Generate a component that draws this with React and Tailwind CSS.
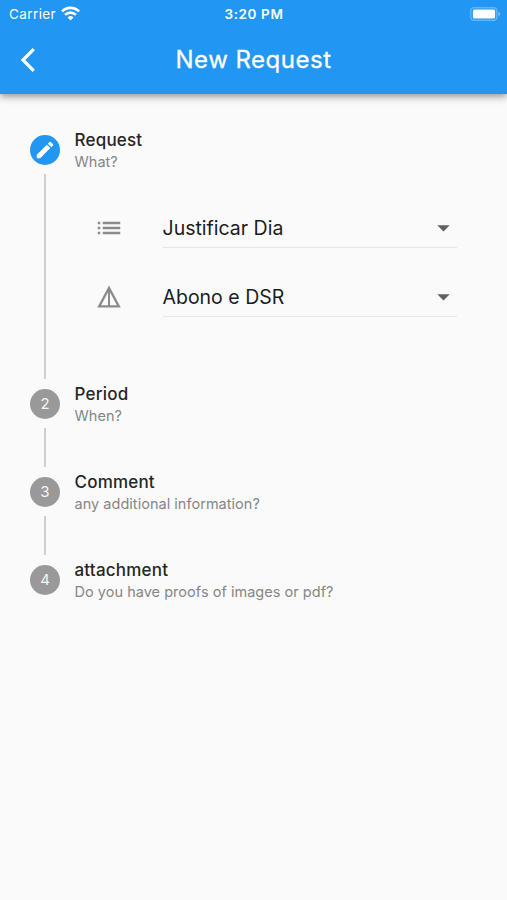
function StatusBar() {
  return (
    <div className="grid h-[27px] grid-cols-3 items-center pl-[9px] pr-[8px]">
      <div className="flex items-center gap-[5px]">
        <span className="text-[13.5px] leading-[18px] tracking-[0.4px]">Carrier</span>
        <svg className="-mt-px" width="19" height="15" viewBox="0 0 19 15" fill="none" stroke="white" strokeWidth="2.7">
          <path d="M1 5.4a12 12 0 0 1 17 0" />
          <path d="M4.1 8.9a7.7 7.7 0 0 1 10.8 0" />
          <path d="M9.5 14.4 6.6 11.4a4.2 4.2 0 0 1 5.8 0Z" fill="white" stroke="none" />
        </svg>
      </div>
      <span className="whitespace-nowrap text-center text-[13.5px] font-semibold leading-[18px] tracking-[0.6px]">3:20 PM</span>
      <svg className="-mr-[2px] justify-self-end" width="31" height="14" viewBox="0 0 31 14">
        <rect x="0.8" y="0.7" width="26" height="12.6" rx="3.4" fill="none" stroke="white" strokeOpacity="0.3" strokeWidth="1.4" />
        <rect x="2.9" y="2.5" width="22.2" height="9" rx="1.5" fill="white" />
        <path d="M28.4 4.8v4.4c1.2-.5 1.9-1.3 1.9-2.2s-.7-1.7-1.9-2.2Z" fill="white" fillOpacity="0.4" />
      </svg>
    </div>
  );
}

function AppBar() {
  return (
    <header className="h-[94px] bg-[#2196f3] text-white shadow-[0_2px_5px_-1px_rgba(0,0,0,0.24),0_5px_6px_0_rgba(0,0,0,0.14),0_1px_12px_0_rgba(0,0,0,0.1)]">
      <StatusBar />
      <div className="grid h-[65px] grid-cols-[60px_1fr_60px] items-center">
        <svg className="ml-[20px]" width="16" height="26" viewBox="0 0 16 26" fill="none" stroke="white" strokeWidth="3.2">
          <path d="M13.8 2.2 3 13l10.8 10.8" />
        </svg>
        <h1 className="text-center text-[24px] font-normal leading-[30px] tracking-[0.5px] [-webkit-text-stroke:0.3px_white]">New Request</h1>
      </div>
    </header>
  );
}

function PencilIcon() {
  return (
    <svg width="22" height="22" viewBox="0 0 24 24" fill="white">
      <path d="M3 17.25V21h3.75L17.81 9.94l-3.75-3.75L3 17.25zM20.71 7.04a1 1 0 0 0 0-1.41l-2.34-2.34a1 1 0 0 0-1.41 0l-1.83 1.83 3.75 3.75 1.83-1.83z" />
    </svg>
  );
}

function ListIcon() {
  return (
    <svg width="30" height="30" viewBox="0 0 24 24" fill="#8b8b8b">
      <path d="M3 13h2v-2H3v2zm0 4h2v-2H3v2zm0-8h2V7H3v2zm4 4h14v-2H7v2zm0 4h14v-2H7v2zM7 7v2h14V7H7z" />
    </svg>
  );
}

function TriangleIcon() {
  return (
    <svg width="30" height="30" viewBox="0 0 24 24" fill="#8b8b8b">
      <path d="M12 2.8 2.6 20.4h18.8L12 2.8zm-.8 5.4v10.3H5.7l5.5-10.3zm1.6 0 5.5 10.3h-5.5V8.2z" />
    </svg>
  );
}

function SelectRow({ icon, value }) {
  return (
    <div className="flex h-[40px] items-start">
      <div className="flex h-[38px] w-[69px] items-center">{icon}</div>
      <div className="flex h-[39px] w-[294px] items-center justify-between border-b border-[#e6e6e6] pr-[7px]">
        <span className="text-[19.5px] leading-[28px] text-[#1c1c1c]">{value}</span>
        <svg width="13" height="7" viewBox="0 0 13 7" fill="#616161">
          <path d="M0.3 0.3h12.4L6.5 6.6z" />
        </svg>
      </div>
    </div>
  );
}

function Step({ marker, active, title, subtitle, line, children }) {
  return (
    <section className="flex gap-[14.5px]">
      <div className="flex w-[30px] flex-col items-center pt-[6px]">
        <div
          className={
            "flex h-[30px] w-[30px] items-center justify-center rounded-full text-[15px] text-white/90 " +
            (active ? "bg-[#2196f3]" : "bg-[#999999]")
          }
        >
          {marker}
        </div>
        {line && <div className={"mb-[4px] mt-[9px] w-[2px] bg-[#cfcfcf] " + line} />}
      </div>
      <div className="flex-1">
        <h2 className="text-[17px] font-medium leading-[22px] tracking-[0.2px] text-[#262626]">{title}</h2>
        <p className="text-[14.5px] leading-[21px] tracking-[0.03px] text-[#868686]">{subtitle}</p>
        {children}
      </div>
    </section>
  );
}

export default function App() {
  return (
    <div className="h-[900px] w-[507px] overflow-hidden bg-[#fafafa] font-['Inter','Liberation_Sans',sans-serif]">
      <AppBar />
      <main className="pl-[30px] pt-[35px]">
        <Step marker={<PencilIcon />} active title="Request" subtitle="What?" line="h-[205px]">
          <div className="flex flex-col gap-[29px] pl-[19px] pt-[37px]">
            <SelectRow icon={<ListIcon />} value="Justificar Dia" />
            <SelectRow icon={<TriangleIcon />} value="Abono e DSR" />
          </div>
        </Step>
        <Step marker="2" title="Period" subtitle="When?" line="h-[39px]" />
        <Step marker="3" title="Comment" subtitle="any additional information?" line="h-[39px]" />
        <Step marker="4" title="attachment" subtitle="Do you have proofs of images or pdf?" />
      </main>
    </div>
  );
}
